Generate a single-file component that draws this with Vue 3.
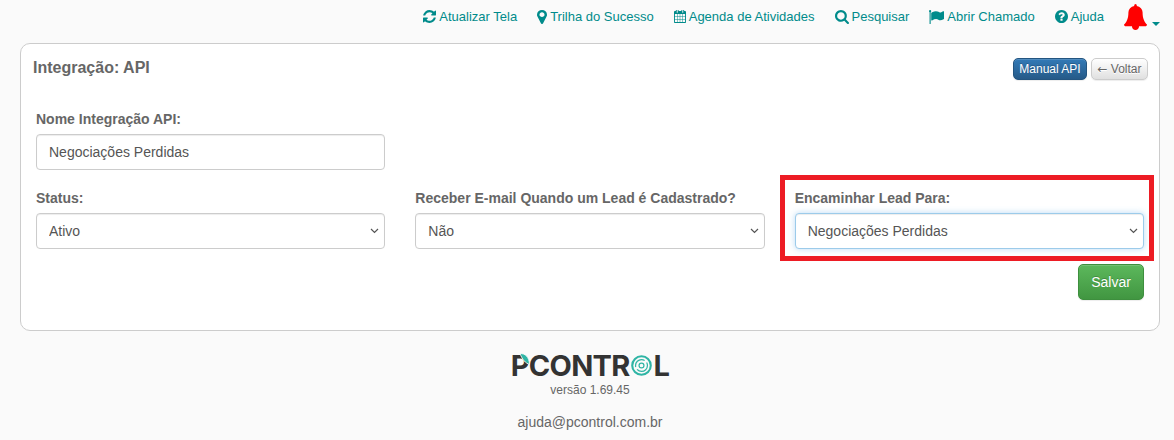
<script setup>
const navItems = [
  { label: 'Atualizar Tela', w: 13, h: 13, vb: '128 128 1536 1536', d: 'M1639 1056q0 5-1 7-64 268-268 434.500t-478 166.500q-146 0-282.500-55t-243.500-157l-129 129q-19 19-45 19t-45-19-19-45v-448q0-26 19-45t45-19h448q26 0 45 19t19 45-19 45l-137 137q71 66 161 102t187 36q134 0 250-65t186-179q11-17 53-117 8-23 30-23h192q13 0 22.500 9.500t9.500 22.500zm25-800v448q0 26-19 45t-45 19h-448q-26 0-45-19t-19-45 19-45l138-138q-148-137-349-137-134 0-250 65t-186 179q-11 17-53 117-8 23-30 23h-199q-13 0-22.500-9.500t-9.500-22.500v-7q65-268 270-434.500t480-166.500q146 0 284 55.500t245 156.500l130-129q19-19 45-19t45 19 19 45z' },
  { label: 'Trilha do Sucesso', w: 10, h: 14, vb: '384 128 1024 1536', d: 'M1152 640q0-106-75-181t-181-75-181 75-75 181 75 181 181 75 181-75 75-181zm256 0q0 109-33 179l-364 774q-16 33-47.500 52t-67.500 19-67.500-19-46.500-52l-365-774q-33-70-33-179 0-212 150-362t362-150 362 150 150 362z' },
  { label: 'Agenda de Atividades', w: 12, h: 13, vb: '64 128 1664 1664', d: 'M192 1664h288v-288h-288v288zm352 0h320v-288h-320v288zm-352-352h288v-320h-288v320zm352 0h320v-320h-320v320zm-352-384h288v-288h-288v288zm736 736h320v-288h-320v288zm-384-736h320v-288h-320v288zm768 736h288v-288h-288v288zm-384-352h320v-320h-320v320zm-352-864v-288q0-13-9.500-22.500t-22.500-9.500h-64q-13 0-22.500 9.500t-9.500 22.500v288q0 13 9.500 22.500t22.500 9.500h64q13 0 22.500-9.500t9.500-22.500zm736 864h288v-320h-288v320zm-384-384h320v-288h-320v288zm384 0h288v-288h-288v288zm32-480v-288q0-13-9.500-22.500t-22.500-9.500h-64q-13 0-22.500 9.500t-9.500 22.500v288q0 13 9.500 22.500t22.500 9.500h64q13 0 22.500-9.500t9.500-22.500zm384-64v1280q0 52-38 90t-90 38h-1408q-52 0-90-38t-38-90v-1280q0-52 38-90t90-38h128v-96q0-66 47-113t113-47h64q66 0 113 47t47 113v96h384v-96q0-66 47-113t113-47h64q66 0 113 47t47 113v96h128q52 0 90 38t38 90z' },
  { label: 'Pesquisar', w: 14, h: 14, vb: '64 128 1664 1664', d: 'M1216 832q0-185-131.500-316.500t-316.500-131.500-316.500 131.500-131.500 316.500 131.500 316.500 316.500 131.500 316.500-131.500 131.500-316.500zm512 832q0 52-38 90t-90 38q-54 0-90-38l-343-342q-179 124-399 124-143 0-273.500-55.500t-225-150-150-225-55.500-273.500 55.500-273.500 150-225 225-150 273.500-55.500 273.500 55.500 225 150 150 225 55.500 273.500q0 220-124 399l343 343q37 37 37 90z' },
  { label: 'Abrir Chamado', w: 15, h: 14, vb: '64 128 1728 1536', d: 'M320 256q0 72-64 110v1266q0 13-9.500 22.500t-22.500 9.500h-64q-13 0-22.500-9.500t-9.500-22.500v-1266q-64-38-64-110 0-53 37.500-90.500t90.500-37.500 90.500 37.500 37.500 90.500zm1472 64v763q0 25-12.500 38.500t-39.500 27.500q-215 116-369 116-61 0-123.500-22t-108.500-48-115.500-48-142.500-22q-192 0-464 146-17 9-33 9-26 0-45-19t-19-45v-742q0-32 31-55 21-14 79-43 236-120 421-120 107 0 200 29t219 88q38 19 88 19 54 0 117.500-21t110-47 88-47 54.500-21q26 0 45 19t19 45z' },
  { label: 'Ajuda', w: 13, h: 13, vb: '128 128 1536 1536', d: 'M1024 1376v-192q0-14-9-23t-23-9h-192q-14 0-23 9t-9 23v192q0 14 9 23t23 9h192q14 0 23-9t9-23zm256-672q0-88-55.500-163t-138.500-116-170-41q-243 0-371 213-15 24 8 42l132 100q7 6 19 6 16 0 25-12 53-68 86-92 34-24 86-24 48 0 85.500 26t37.500 59q0 38-20 61t-68 45q-63 28-115.500 86.500t-52.500 125.500v36q0 14 9 23t23 9h192q14 0 23-9t9-23q0-19 21.500-49.500t54.500-49.500q32-18 49-28.500t46-35 44.500-48 28-60.500 12.500-81zm384 192q0 209-103 385.500t-279.500 279.500-385.500 103-385.500-103-279.500-279.500-103-385.500 103-385.500 279.500-279.500 385.500-103 385.500 103 279.500 279.500 103 385.500z' },
]
const bell = 'M1728 1408q0 52-38 90t-90 38h-448q0 106-75 181t-181 75-181-75-75-181h-448q-52 0-90-38t-38-90q50-42 91-88t85-119.500 74.500-158.500 50-206 19.500-260q0-152 117-282.500t307-158.500q-8-19-8-39 0-40 28-68t68-28 68 28 28 68q0 20-8 39 190 28 307 158.500t117 282.500q0 139 19.500 260t50 206 74.500 158.500 85 119.500 91 88z'
</script>

<template>
  <div class="page">
    <nav class="topnav">
      <a v-for="item in navItems" :key="item.label" class="navlink">
        <svg class="navicon" :width="item.w" :height="item.h" :viewBox="item.vb" preserveAspectRatio="none"><path :d="item.d" fill="currentColor" /></svg>
        <span>{{ item.label }}</span>
      </a>
      <a class="bellwrap">
        <svg class="bell" viewBox="64 0 1664 1792" preserveAspectRatio="none"><path :d="bell" fill="#ff0000" /></svg>
        <span class="caret"></span>
      </a>
    </nav>

    <section class="card">
      <header class="cardhead">
        <h3>Integração: API</h3>
        <div class="actions">
          <button class="btn primary">Manual API</button>
          <button class="btn back"><span class="arrow">←</span> Voltar</button>
        </div>
      </header>

      <div class="grid">
        <div class="field">
          <label>Nome Integração API:</label>
          <input class="control" type="text" value="Negociações Perdidas" />
        </div>
        <div></div>
        <div></div>
        <div class="field">
          <label>Status:</label>
          <select class="control pick"><option>Ativo</option></select>
        </div>
        <div class="field">
          <label>Receber E-mail Quando um Lead é Cadastrado?</label>
          <select class="control pick"><option>Não</option></select>
        </div>
        <div class="field">
          <label>Encaminhar Lead Para:</label>
          <select class="control pick focused"><option>Negociações Perdidas</option></select>
          <div class="redbox"></div>
        </div>
      </div>

      <div class="savebar">
        <button class="btn save">Salvar</button>
      </div>
    </section>

    <footer class="foot">
      <div class="logo">
        <span class="logo-p">P<svg class="leaf" viewBox="0 0 12 13"><path d="M1 0.5 C7 0.5 11 4 11.500 12.500 C7 11 3.500 7 1 0.500Z" fill="#2fb5a5" stroke="#fafafa" stroke-width="1" /></svg></span><span>CONTR</span>
        <svg class="logo-o" viewBox="0 0 24 24">
          <circle cx="12" cy="12" r="10.600" fill="none" stroke="#2fb5a5" stroke-width="2.400" />
          <circle cx="12" cy="12" r="6.800" fill="none" stroke="#2fb5a5" stroke-width="1.400" stroke-dasharray="16 3" />
          <circle cx="12" cy="12" r="2.800" fill="none" stroke="#2fb5a5" stroke-width="1.400" />
        </svg>
        <span>L</span>
      </div>
      <p class="version">versão 1.69.45</p>
      <p class="mail">ajuda@pcontrol.com.br</p>
    </footer>
  </div>
</template>

<style>
html, body { margin: 0; background: #fafafa; }
</style>

<style scoped>
.page {
  width: 1174px;
  height: 440px;
  overflow: hidden;
  font-family: "Liberation Sans", Arial, sans-serif;
  background: #fafafa;
  color: #666;
}
.topnav {
  height: 33px;
  display: flex;
  justify-content: flex-end;
  align-items: center;
  gap: 20px;
  padding-right: 14px;
  box-sizing: border-box;
}
.navlink {
  display: flex;
  align-items: center;
  gap: 3px;
  font-size: 13px;
  color: #008b8b;
}
.navicon { display: block; }
.bellwrap {
  display: flex;
  align-items: flex-end;
  align-self: flex-start;
  margin-top: 4px;
}
.bell { width: 23px; height: 26px; display: block; }
.caret {
  width: 0; height: 0;
  border-left: 4px solid transparent;
  border-right: 4px solid transparent;
  border-top: 4px solid #008b8b;
  margin: 0 0 4px 5px;
}
.card {
  margin: 10px 14px 0 20px;
  height: 288px;
  box-sizing: border-box;
  background: #fff;
  border: 1px solid #ccc;
  border-radius: 10px;
  padding: 14px 15px 0 15px;
}
.cardhead {
  display: flex;
  justify-content: space-between;
  align-items: flex-start;
  margin-left: -3px;
  margin-right: -4px;
  height: 51px;
}
.cardhead h3 {
  margin: 0;
  font-size: 16px;
  line-height: 20px;
  font-weight: 700;
  color: #666;
}
.actions { display: flex; gap: 4px; }
.btn {
  font-family: "Liberation Sans", Arial, sans-serif;
  cursor: pointer;
  box-sizing: border-box;
  box-shadow: inset 0 1px 0 rgba(255,255,255,.15), 0 1px 1px rgba(0,0,0,.075);
}
.primary {
  width: 74px; height: 22px;
  padding: 0;
  font-size: 12px;
  color: #fff;
  text-shadow: 0 -1px 0 rgba(0,0,0,.2);
  border: 1px solid #245580;
  border-radius: 5px;
  background: linear-gradient(#337ab7, #265a88);
}
.back {
  width: 57px; height: 22px;
  padding: 0;
  font-size: 12px;
  color: #666;
  text-shadow: 0 1px 0 #fff;
  border: 1px solid #ccc;
  border-radius: 5px;
  background: linear-gradient(#fff, #e0e0e0);
}
.arrow { font-family: "DejaVu Sans", sans-serif; }
.grid {
  display: grid;
  grid-template-columns: repeat(3, 1fr);
  column-gap: 30px;
  row-gap: 18px;
}
.field { position: relative; display: flex; flex-direction: column; }
.field label {
  font-size: 14px;
  font-weight: 700;
  line-height: 20px;
  color: #666;
  margin-bottom: 5px;
}
.control {
  height: 36px;
  width: 100%;
  box-sizing: border-box;
  font-family: "Liberation Sans", Arial, sans-serif;
  font-size: 14px;
  color: #555;
  background-color: #fff;
  border: 1px solid #ccc;
  border-radius: 4px;
  padding: 6px 12px;
  box-shadow: inset 0 1px 1px rgba(0,0,0,.075);
  outline: none;
}
.pick {
  appearance: none;
  -webkit-appearance: none;
  background-image: url("data:image/svg+xml,%3Csvg xmlns='http://www.w3.org/2000/svg' width='9' height='6'%3E%3Cpath d='M1 1l3.500 3.500L8 1' fill='none' stroke='%23555' stroke-width='1.200'/%3E%3C/svg%3E");
  background-repeat: no-repeat;
  background-position: right 5px center;
}
.focused {
  border-color: #9ccbea;
  box-shadow: inset 0 1px 1px rgba(0,0,0,.075), 0 0 6px rgba(102,175,233,.45);
}
.redbox {
  position: absolute;
  left: -15px; right: -10px;
  top: -13px; bottom: -12px;
  border: 5px solid #ed1c24;
  box-sizing: border-box;
  pointer-events: none;
}
.savebar {
  display: flex;
  justify-content: flex-end;
  margin-top: 15px;
}
.save {
  width: 66px; height: 36px;
  padding: 0;
  font-size: 14px;
  color: #fff;
  text-shadow: 0 -1px 0 rgba(0,0,0,.2);
  border: 1px solid #3e8f3e;
  border-radius: 5px;
  background: linear-gradient(#5cb85c, #419641);
}
.foot {
  display: flex;
  flex-direction: column;
  align-items: center;
  margin-top: 22px;
  padding-left: 6px;
}
.logo {
  display: flex;
  align-items: center;
  height: 25px;
  font-family: "Inter", sans-serif;
  font-weight: 700;
  font-size: 29px;
  line-height: 25px;
  color: #333;
  letter-spacing: -0.7px;
}
.logo-p { position: relative; }
.leaf {
  position: absolute;
  left: 8px;
  top: 0;
  width: 11px;
  height: 12px;
}
.logo-o { width: 21px; height: 21px; margin: 0 2px 0 1px; }
.version { margin: 4px 0 0; font-size: 12px; line-height: 16px; color: #666; }
.mail { margin: 14px 0 0; font-size: 14px; line-height: 20px; color: #666; }
</style>
